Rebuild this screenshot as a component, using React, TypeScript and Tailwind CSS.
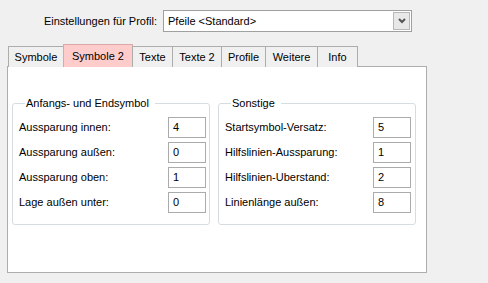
import React from 'react';

const tabs = [
  { label: 'Symbole', w: 'w-[56px]' },
  { label: 'Symbole 2', w: 'w-[70px]', active: true },
  { label: 'Texte', w: 'w-[41px]' },
  { label: 'Texte 2', w: 'w-[50px]' },
  { label: 'Profile', w: 'w-[45px]' },
  { label: 'Weitere', w: 'w-[53px]' },
  { label: 'Info', w: 'w-[41px]' },
];

const leftRows = [
  { label: 'Aussparung innen:', value: '4' },
  { label: 'Aussparung außen:', value: '0' },
  { label: 'Aussparung oben:', value: '1' },
  { label: 'Lage außen unter:', value: '0' },
];

const rightRows = [
  { label: 'Startsymbol-Versatz:', value: '5' },
  { label: 'Hilfslinien-Aussparung:', value: '1' },
  { label: 'Hilfslinien-Uberstand:', value: '2' },
  { label: 'Linienlänge außen:', value: '8' },
];

const Group = ({
  title,
  rows,
  pr,
}: {
  title: string;
  rows: { label: string; value: string }[];
  pr: string;
}) => (
  <fieldset
    className={`w-[198px] border border-[#d5dde3] rounded-[3px] pl-[6px] ${pr} pt-[7px] pb-[12px]`}
  >
    <legend className="ml-[6px] pl-[1px] pr-[6px] leading-[14px]">{title}</legend>
    <div className="flex flex-col gap-[5px]">
      {rows.map((row) => (
        <div key={row.label} className="flex items-center h-[20px]">
          <span className="flex-1">{row.label}</span>
          <div className="w-[38px] h-[21px] border border-[#ababab] bg-white flex items-center pl-[4px]">
            {row.value}
          </div>
        </div>
      ))}
    </div>
  </fieldset>
);

export default function App() {
  return (
    <div
      className="w-[488px] h-[283px] bg-[#f0f0f0] text-black text-[11px] overflow-hidden"
      style={{ fontFamily: '"Liberation Sans", Arial, sans-serif' }}
    >
      {/* Profile selector */}
      <div className="flex items-center pt-[10px]">
        <span className="w-[163px] text-right pr-[6px]">Einstellungen für Profil:</span>
        <div className="w-[249px] h-[22px] border border-[#a0a0a0] bg-white flex items-center justify-between pl-[4px] pr-[1px]">
          <span>Pfeile &lt;Standard&gt;</span>
          <div className="w-[17px] h-[18px] border border-[#b8b8b8] bg-[#e8e8e8] flex items-center justify-center">
            <svg width="8" height="6" viewBox="0 0 8 6">
              <polyline points="1,1 4,4 7,1" fill="none" stroke="#555" strokeWidth="2" />
            </svg>
          </div>
        </div>
      </div>

      {/* Tabs */}
      <div className="flex items-end h-[23px] mt-[12px] ml-[8px] relative z-10">
        {tabs.map((t, i) =>
          t.active ? (
            <div
              key={t.label}
              className={`${t.w} h-[23px] -ml-px border border-b-0 border-[#d9a9a9] bg-[#ffcccc] flex items-start justify-center pt-[3px]`}
            >
              {t.label}
            </div>
          ) : (
            <div
              key={t.label}
              className={`${t.w} h-[21px] ${i > 0 ? '-ml-px' : ''} border border-b-0 border-[#adadad] bg-[#f0f0f0] flex items-center justify-center pt-[1px]`}
            >
              {t.label}
            </div>
          )
        )}
      </div>

      {/* Panel */}
      <div className="ml-[7px] -mt-px w-[420px] h-[207px] border border-[#adadad] bg-white pl-[4px] pt-[29px]">
        <div className="flex gap-[8px]">
          <Group title="Anfangs- und Endsymbol" rows={leftRows} pr="pr-[3px]" />
          <Group title="Sonstige" rows={rightRows} pr="pr-[4px]" />
        </div>
      </div>
    </div>
  );
}
